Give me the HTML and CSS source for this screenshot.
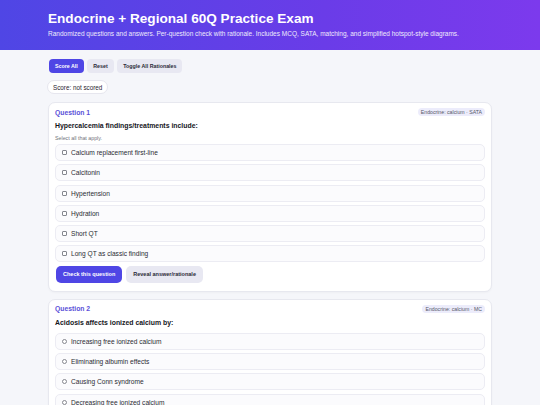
FILE: index.html
```html
<!DOCTYPE html>
<html lang="en">
<head>
    <meta charset="UTF-8">
    <meta name="viewport" content="width=device-width, initial-scale=1.0">
    <title>Endocrine + Regional 60Q Practice Exam</title>
    <link rel="stylesheet" href="styles.css">
</head>
<body>
    <header class="hero">
        <div class="wrap">
            <h1>Endocrine + Regional 60Q Practice Exam</h1>
            <p>Randomized questions and answers. Per-question check with rationale. Includes MCQ, SATA, matching, and simplified hotspot-style diagrams.</p>
        </div>
    </header>

    <main class="wrap">
        <div class="toolbar">
            <button class="btn primary">Score All</button>
            <button class="btn">Reset</button>
            <button class="btn">Toggle All Rationales</button>
        </div>
        <div class="score">Score: not scored</div>

        <section class="card">
            <div class="card-head">
                <span class="qnum">Question 1</span>
                <span class="tag">Endocrine: calcium · SATA</span>
            </div>
            <div class="qtext">Hypercalcemia findings/treatments include:</div>
            <div class="hint">Select all that apply.</div>
            <label class="opt"><input type="checkbox"> Calcium replacement first-line</label>
            <label class="opt"><input type="checkbox"> Calcitonin</label>
            <label class="opt"><input type="checkbox"> Hypertension</label>
            <label class="opt"><input type="checkbox"> Hydration</label>
            <label class="opt"><input type="checkbox"> Short QT</label>
            <label class="opt"><input type="checkbox"> Long QT as classic finding</label>
            <div class="actions">
                <button class="btn primary big">Check this question</button>
                <button class="btn big">Reveal answer/rationale</button>
            </div>
        </section>

        <section class="card">
            <div class="card-head">
                <span class="qnum">Question 2</span>
                <span class="tag">Endocrine: calcium · MC</span>
            </div>
            <div class="qtext">Acidosis affects ionized calcium by:</div>
            <label class="opt"><input type="radio" name="q2"> Increasing free ionized calcium</label>
            <label class="opt"><input type="radio" name="q2"> Eliminating albumin effects</label>
            <label class="opt"><input type="radio" name="q2"> Causing Conn syndrome</label>
            <label class="opt"><input type="radio" name="q2"> Decreasing free ionized calcium</label>
        </section>
    </main>
</body>
</html>
```

FILE: styles.css
```css
body {
    font-family: "Liberation Sans", Arial, sans-serif;
    margin: 0;
    padding: 0;
    background-color: #f5f6fa;
    color: #1f2330;
}

.wrap {
    width: 444px;
    margin: 0 auto;
}

.hero {
    background: linear-gradient(90deg, #4f46e5 0%, #6a3ce8 60%, #7c3aed 100%);
    color: #fff;
    height: 50px;
    box-sizing: border-box;
    padding-top: 11px;
}

.hero h1 {
    margin: 0;
    font-size: 13.6px;
    line-height: 16px;
    font-weight: bold;
}

.hero p {
    margin: 3px 0 0;
    font-size: 6.5px;
    line-height: 8px;
    opacity: 0.9;
}

.toolbar {
    display: flex;
    gap: 3.5px;
    padding-top: 9px;
    padding-left: 1px;
}

.btn {
    font-family: inherit;
    font-size: 5.3px;
    font-weight: bold;
    height: 14px;
    padding: 0 6px;
    border: none;
    border-radius: 4px;
    background-color: #e8e8f2;
    color: #2a2a38;
}

.btn.primary {
    background-color: #4f46e5;
    color: #fff;
}

.btn.big {
    height: 17px;
    font-size: 5.5px;
    padding: 0 7px;
    border-radius: 5px;
}

.score {
    display: inline-block;
    margin-top: 7px;
    margin-left: -1px;
    height: 14px;
    line-height: 14px;
    padding: 0 5px;
    font-size: 6.3px;
    background-color: #fff;
    border: 1px solid #e6e6ee;
    border-radius: 7px;
    box-sizing: border-box;
}

.card {
    background-color: #fff;
    border: 1px solid #e7e8ef;
    border-radius: 7px;
    padding: 4px 6px 8px;
    margin-top: 8px;
    box-shadow: 0 1px 2px rgba(0, 0, 0, 0.03);
}

.card + .card {
    margin-top: 7px;
}

.card-head {
    display: flex;
    justify-content: space-between;
    align-items: center;
    height: 10px;
}

.qnum {
    color: #5b4fd8;
    font-weight: bold;
    font-size: 6.8px;
}

.tag {
    font-size: 5.2px;
    line-height: 6px;
    color: #555868;
    background-color: #ececfb;
    border-radius: 4px;
    padding: 1px 3px;
}

.qtext {
    font-weight: bold;
    font-size: 6.9px;
    margin-top: 4px;
    line-height: 10px;
    color: #15161c;
}

.hint {
    font-size: 5.3px;
    color: #70727c;
    margin-top: 4px;
    margin-bottom: 3px;
    line-height: 6px;
}

.qtext + .opt {
    margin-top: 5px;
}

.opt {
    display: flex;
    align-items: center;
    height: 17px;
    box-sizing: border-box;
    padding-left: 6px;
    margin-bottom: 3.3px;
    background-color: #fbfbfd;
    border: 1px solid #ececf3;
    border-radius: 5px;
    font-size: 6.6px;
    color: #2a2b33;
}

.opt input {
    appearance: none;
    width: 5px;
    height: 5px;
    margin: 0 4px 0 0;
    border: 0.7px solid #85878f;
    border-radius: 1px;
    background-color: #fff;
}

.opt input[type="radio"] {
    border-radius: 50%;
}

.actions {
    display: flex;
    gap: 4px;
    padding-left: 1px;
}
```
